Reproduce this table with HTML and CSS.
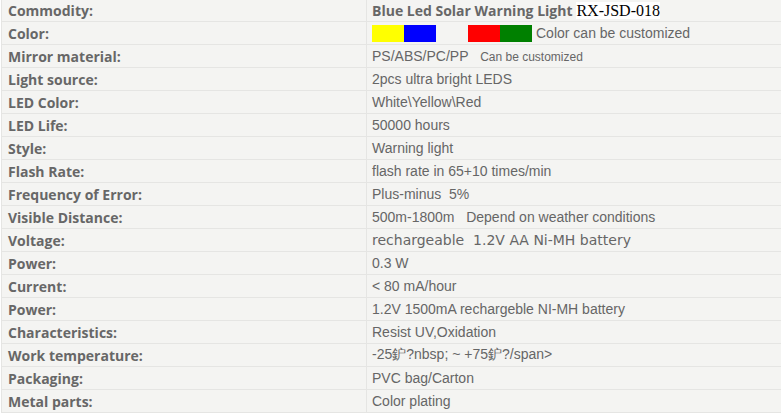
FILE: index.html
```html
<!DOCTYPE html>
<html>
<head>
<meta charset="utf-8">
<link rel="stylesheet" href="styles.css">
</head>
<body>
<table class="spec">
  <tr><td class="k">Commodity:</td><td class="v"><span class="strong">Blue Led Solar Warning Light</span> <span class="model">RX-JSD-018</span></td></tr>
  <tr><td class="k">Color:</td><td class="v"><div class="swatches"><span class="sw yellow"></span><span class="sw blue"></span><span class="sw-gap"></span><span class="sw red"></span><span class="sw green"></span><span class="sw-note">Color can be customized</span></div></td></tr>
  <tr><td class="k">Mirror material:</td><td class="v">PS/ABS/PC/PP&nbsp;&nbsp; <span class="small">Can be customized</span></td></tr>
  <tr><td class="k">Light source:</td><td class="v">2pcs ultra bright LEDS</td></tr>
  <tr><td class="k">LED Color:</td><td class="v">White\Yellow\Red</td></tr>
  <tr><td class="k">LED Life:</td><td class="v">50000 hours</td></tr>
  <tr><td class="k">Style:</td><td class="v">Warning light</td></tr>
  <tr><td class="k">Flash Rate:</td><td class="v">flash rate in 65+10 times/min</td></tr>
  <tr><td class="k">Frequency of Error:</td><td class="v">Plus-minus&nbsp; 5%</td></tr>
  <tr><td class="k">Visible Distance:</td><td class="v">500m-1800m&nbsp;&nbsp; Depend on weather conditions</td></tr>
  <tr><td class="k">Voltage:</td><td class="v wide">rechargeable&nbsp; 1.2V AA Ni-MH battery</td></tr>
  <tr><td class="k">Power:</td><td class="v">0.3 W</td></tr>
  <tr><td class="k">Current:</td><td class="v">&lt; 80 mA/hour</td></tr>
  <tr><td class="k">Power:</td><td class="v">1.2V 1500mA rechargeble NI-MH battery</td></tr>
  <tr><td class="k">Characteristics:</td><td class="v">Resist UV,Oxidation</td></tr>
  <tr><td class="k">Work temperature:</td><td class="v">-25鈩?nbsp; ~ +75鈩?/span&gt;</td></tr>
  <tr><td class="k">Packaging:</td><td class="v">PVC bag/Carton</td></tr>
  <tr><td class="k">Metal parts:</td><td class="v">Color plating</td></tr>
</table>
</body>
</html>
```
FILE: styles.css
```css
html, body {
  margin: 0;
  padding: 0;
  background: #ffffff;
  overflow: hidden;
}
.spec {
  margin: -2px 0 0 1px;
  border-collapse: collapse;
  width: 820px;
  background: #f4f4f2;
  table-layout: fixed;
}
.spec td {
  height: 22px;
  padding: 0 0 0 6px;
  border: 1px solid #e5e5e3;
  vertical-align: middle;
  color: #666666;
  white-space: nowrap;
  overflow: hidden;
}
.spec td.k {
  width: 358px;
  font-family: "Open Sans", "Noto Sans", sans-serif;
  font-weight: 700;
  font-size: 14px;
  color: #676767;
}
.spec td.v {
  padding-left: 5px;
  font-family: "Liberation Sans", Arial, sans-serif;
  font-size: 14px;
}
.spec td.wide {
  font-family: "DejaVu Sans", Verdana, sans-serif;
  font-size: 14px;
}
.strong {
  font-family: "Open Sans", "Noto Sans", sans-serif;
  font-weight: 700;
  font-size: 14px;
  color: #676767;
}
.model {
  font-family: "Liberation Serif", "Times New Roman", serif;
  font-size: 16px;
  color: #000000;
  background: #ffffff;
}
.small {
  font-size: 12px;
}
.swatches {
  display: flex;
  align-items: center;
}
.sw {
  display: block;
  width: 32px;
  height: 17px;
}
.sw-gap {
  display: block;
  width: 32px;
}
.yellow { background: #ffff00; }
.blue { background: #0000ff; }
.red { background: #ff0000; }
.green { background: #008000; }
.sw-note {
  margin-left: 4px;
}
```
